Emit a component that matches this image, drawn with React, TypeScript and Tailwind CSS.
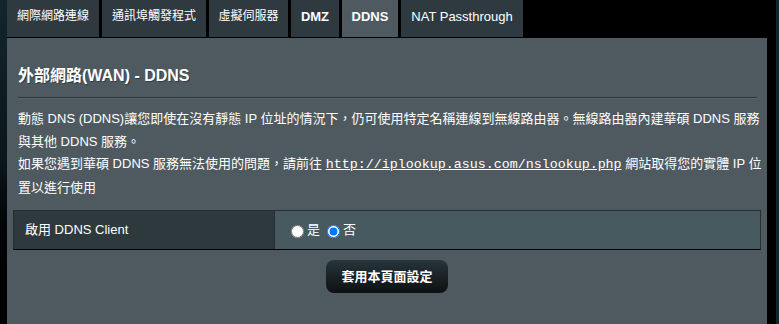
import React from 'react';

const tabs = [
  { label: '網際網路連線', w: 'w-[92px]' },
  { label: '通訊埠觸發程式', w: 'w-[104px]' },
  { label: '虛擬伺服器', w: 'w-[79px]' },
  { label: 'DMZ', w: 'w-[48px]', latin: true, bold: true },
  { label: 'DDNS', w: 'w-[56px]', latin: true, bold: true, active: true },
  { label: 'NAT Passthrough', w: 'w-[122px]', latin: true },
];

export default function App() {
  return (
    <div className="flex h-[324px] w-[779px] overflow-hidden bg-black font-['Liberation_Sans','Noto_Sans_CJK_TC',sans-serif] text-white">
      <div className="w-[7px] bg-gradient-to-b from-[#12262d] via-[#0b151a] to-black" />

      <div className="flex w-[760px] flex-col">
        {/* tabs */}
        <div className="flex h-[37px] gap-[3px]">
          {tabs.map((t) => (
            <div
              key={t.label}
              className={`${t.w} flex justify-center pt-[9px] leading-[15px] ${
                t.latin ? 'text-[13px]' : 'text-[12px]'
              } ${t.active ? 'bg-[#4e5a5f]' : 'bg-[#2f3a40]'} ${t.bold ? 'font-bold' : ''}`}
            >
              {t.label}
            </div>
          ))}
        </div>

        <div className="mt-[1px] flex-1 bg-[#4e5a5f]">
          <div className="ml-[11px] mr-[10px] pt-[28px]">
            <h2 className="text-[16px] font-bold leading-[20px] [text-shadow:1px_1px_0_rgba(0,0,0,0.35)]">
              外部網路(WAN) - DDNS
            </h2>
            <div className="mt-[11px] h-[2px] border-t border-[#2c3539] bg-[#5a666b]" />

            <div className="mt-[9px] whitespace-nowrap text-[13px] leading-[22.5px]">
              <p>
                動態 DNS (DDNS)讓您即使在沒有靜態 IP 位址的情況下，仍可使用特定名稱連線到無線路由器。無線路由器內建華碩 DDNS 服務
                <br />
                與其他 DDNS 服務。
              </p>
              <p>
                如果您遇到華碩 DDNS 服務無法使用的問題，請前往{' '}
                <a className="font-['Liberation_Mono',monospace] text-[13.33px] underline" href="#">
                  http://iplookup.asus.com/nslookup.php
                </a>{' '}
                網站取得您的實體 IP 位
                <br />
                置以進行使用
              </p>
            </div>
          </div>

          {/* setting row */}
          <div className="mx-[6px] mt-[11px] flex h-[40px] border border-[#282d30] border-b-black text-[13px]">
            <div className="flex w-[261px] items-center border-r border-[#282d30] bg-[#2e393e] pl-[11px]">
              啟用 DDNS Client
            </div>
            <div className="flex flex-1 items-center bg-[#475a5f] pl-[11px]">
              <label className="flex items-center">
                <input type="radio" name="ddns" className="m-[3px_3px_0_5px] h-[13px] w-[13px]" readOnly />
                是
              </label>
              <label className="ml-[2px] flex items-center">
                <input type="radio" name="ddns" className="m-[3px_3px_0_5px] h-[13px] w-[13px]" defaultChecked />
                否
              </label>
            </div>
          </div>

          <div className="mt-[10px] flex justify-center">
            <button className="h-[33px] w-[122px] rounded-[8px] bg-gradient-to-b from-[#27353b] to-[#0e1113] text-[13px] font-bold text-white">
              套用本頁面設定
            </button>
          </div>
        </div>
      </div>

      <div className="w-[9px] bg-black" />
      <div className="w-[3px] bg-[#15252c]" />
    </div>
  );
}
